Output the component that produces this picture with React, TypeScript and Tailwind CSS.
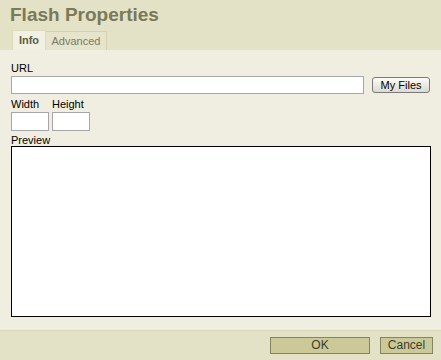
export default function App() {
  return (
    <div className="w-[441px] h-[360px] flex flex-col bg-[#efeee1] text-[11px] text-black overflow-hidden" style={{ fontFamily: '"Liberation Sans", Arial, sans-serif' }}>
      {/* Header */}
      <div className="h-[50px] bg-[#e3e1c6] flex flex-col">
        <h1 className="pl-[10px] pt-[2px] h-[30px] text-[19px] font-bold text-[#7a7958] leading-[26px]">Flash Properties</h1>
        <div className="flex pl-[12px] items-end h-[20px]">
          <div className="h-[20px] w-[34px] bg-[#f1f0e3] border-t border-l border-r border-[#dcdab8] flex items-center justify-center font-bold text-[#5e5d45]">
            Info
          </div>
          <div className="h-[19px] w-[61px] bg-[#e6e4ca] border-t border-r border-[#d3d1ae] flex items-center justify-center text-[#7c7b63]">
            Advanced
          </div>
        </div>
      </div>

      {/* Body */}
      <div className="flex-1 flex flex-col px-[11px] pt-[10px]">
        <label className="leading-[16px] h-[16px]">URL</label>
        <div className="flex items-center">
          <div className="w-[354px] h-[18px] bg-white border border-[#a7a6aa]" />
          <button className="ml-[8px] w-[58px] h-[16px] rounded-[3px] border border-[#7a7a7a] bg-gradient-to-b from-[#fbfbf8] to-[#dcdad0] text-[11px] leading-[14px] text-black">
            My Files
          </button>
        </div>
        <div className="flex gap-[3px] mt-[4px]">
          <div className="flex flex-col">
            <span className="leading-[12px] h-[12px]">Width</span>
            <div className="w-[38px] h-[19px] mt-[2px] bg-white border border-[#a7a6aa]" />
          </div>
          <div className="flex flex-col">
            <span className="leading-[12px] h-[12px]">Height</span>
            <div className="w-[38px] h-[19px] mt-[2px] bg-white border border-[#a7a6aa]" />
          </div>
        </div>
        <span className="leading-[12px] h-[12px] mt-[3px]">Preview</span>
        <div className="w-[420px] h-[171px] bg-white border border-black" />
      </div>

      {/* Footer */}
      <div className="h-[30px] bg-[#e3e1c6] border-t border-[#d8d6b4] flex items-center justify-end pr-[8px] gap-[10px]">
        <button className="w-[100px] h-[17px] bg-[#cac997] border border-[#85845c] text-[12px] leading-[15px] text-[#3c3c2c]">OK</button>
        <button className="w-[53px] h-[17px] bg-[#cac997] border border-[#85845c] text-[12px] leading-[15px] text-[#3c3c2c]">Cancel</button>
      </div>
    </div>
  );
}
